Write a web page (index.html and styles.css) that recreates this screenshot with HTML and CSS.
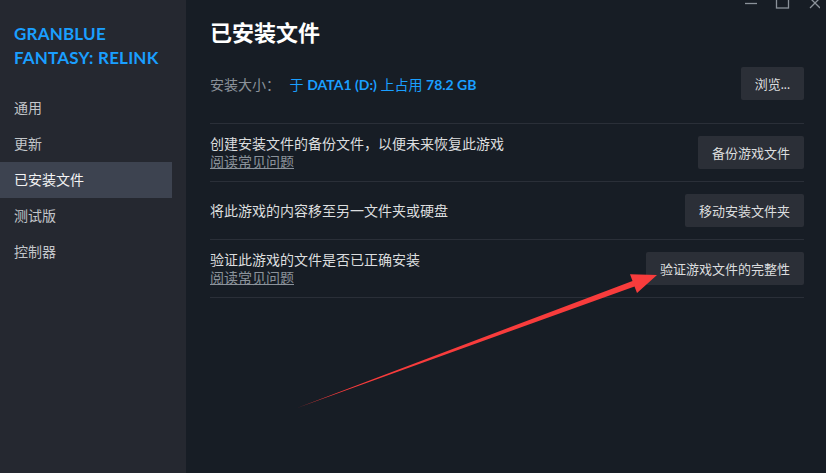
FILE: index.html
```html
<!DOCTYPE html>
<html lang="zh-CN">
<head>
  <meta charset="UTF-8">
  <meta name="viewport" content="width=device-width, initial-scale=1.0">
  <title>已安装文件</title>
  <link rel="stylesheet" href="styles.css">
</head>
<body>

  <div class="window">
    <div class="sidebar">
      <div class="game-title">GRANBLUE<br>FANTASY: RELINK</div>
      <div class="nav">
        <div class="nav-item">通用</div>
        <div class="nav-item">更新</div>
        <div class="nav-item active">已安装文件</div>
        <div class="nav-item">测试版</div>
        <div class="nav-item">控制器</div>
      </div>
    </div>

    <div class="main">
      <h1>已安装文件</h1>

      <div class="row size-row">
        <div class="size-text">
          <span class="label">安装大小：</span>
          <span class="value">于 <b>DATA1 (D:)</b> 上占用 <b>78.2 GB</b></span>
        </div>
        <button class="btn">浏览...</button>
      </div>

      <div class="row">
        <div class="row-text">
          <div>创建安装文件的备份文件，以便未来恢复此游戏</div>
          <a class="faq" href="#">阅读常见问题</a>
        </div>
        <button class="btn">备份游戏文件</button>
      </div>

      <div class="row">
        <div class="row-text">
          <div>将此游戏的内容移至另一文件夹或硬盘</div>
        </div>
        <button class="btn">移动安装文件夹</button>
      </div>

      <div class="row">
        <div class="row-text">
          <div>验证此游戏的文件是否已正确安装</div>
          <a class="faq" href="#">阅读常见问题</a>
        </div>
        <button class="btn">验证游戏文件的完整性</button>
      </div>
    </div>
  </div>

  <!-- window controls, cut off at the top edge -->
  <svg class="win-controls" width="90" height="12" viewBox="0 0 90 12">
    <line x1="15" y1="3.5" x2="27" y2="3.5" stroke="#8b929a" stroke-width="1.3"/>
    <rect x="46.5" y="-4" width="12" height="12" fill="none" stroke="#8b929a" stroke-width="1.3"/>
    <line x1="80" y1="-2" x2="90" y2="8" stroke="#8b929a" stroke-width="1.3"/>
    <line x1="90" y1="-2" x2="80" y2="8" stroke="#8b929a" stroke-width="1.3"/>
  </svg>

  <!-- red annotation arrow -->
  <svg class="arrow" width="826" height="473" viewBox="0 0 826 473">
    <polygon points="297,408 632.5,280.9 630,274.3 657,275 637,293.1 634.5,286.5" fill="#f83c3c"/>
  </svg>

</body>
</html>
```

FILE: styles.css
```css
body {
  margin: 0;
  background-color: #171d25;
  font-family: "Lato", "Noto Sans CJK SC", sans-serif;
  color: #dcdedf;
  overflow: hidden;
}

.window {
  display: flex;
  height: 473px;
}

.sidebar {
  width: 172px;
  padding: 22px 14px 0 0;
  background-color: #252830;
  flex-shrink: 0;
}

.game-title {
  padding-left: 14px;
  font-size: 17px;
  font-weight: 700;
  line-height: 24px;
  color: #1a9fff;
  letter-spacing: 0.2px;
}

.nav {
  margin-top: 20px;
}

.nav-item {
  height: 36px;
  line-height: 36px;
  padding-left: 14px;
  font-size: 14px;
  color: #c3c6ca;
}

.nav-item.active {
  background-color: #3d4350;
  color: #f4f4f4;
}

.main {
  flex: 1;
  padding: 18px 22px 0 24px;
}

h1 {
  margin: 0 0 14px;
  font-size: 22px;
  line-height: 30px;
  font-weight: 700;
  color: #ffffff;
}

.row {
  display: flex;
  align-items: center;
  justify-content: space-between;
  height: 33px;
  padding: 12px 0;
  border-bottom: 1px solid #2a2f38;
}

.size-row {
  padding: 5px 0 23px;
}

.size-text {
  font-size: 14px;
}

.label {
  color: #8b929a;
  margin-right: 6px;
}

.value {
  color: #1a9fff;
}

.value b {
  font-weight: 700;
}

.row-text {
  font-size: 14px;
  line-height: 18px;
  color: #dcdedf;
}

.faq {
  color: #8b929a;
  text-decoration: underline;
  font-size: 14px;
}

.btn {
  height: 33px;
  padding: 0 14px;
  border: none;
  border-radius: 2px;
  background-color: #2b2f37;
  color: #dcdedf;
  font-family: "Lato", "Noto Sans CJK SC", sans-serif;
  font-size: 13px;
  cursor: pointer;
}

.win-controls {
  position: absolute;
  top: 0;
  right: 6px;
}

.arrow {
  position: absolute;
  top: 0;
  left: 0;
  pointer-events: none;
}
```
